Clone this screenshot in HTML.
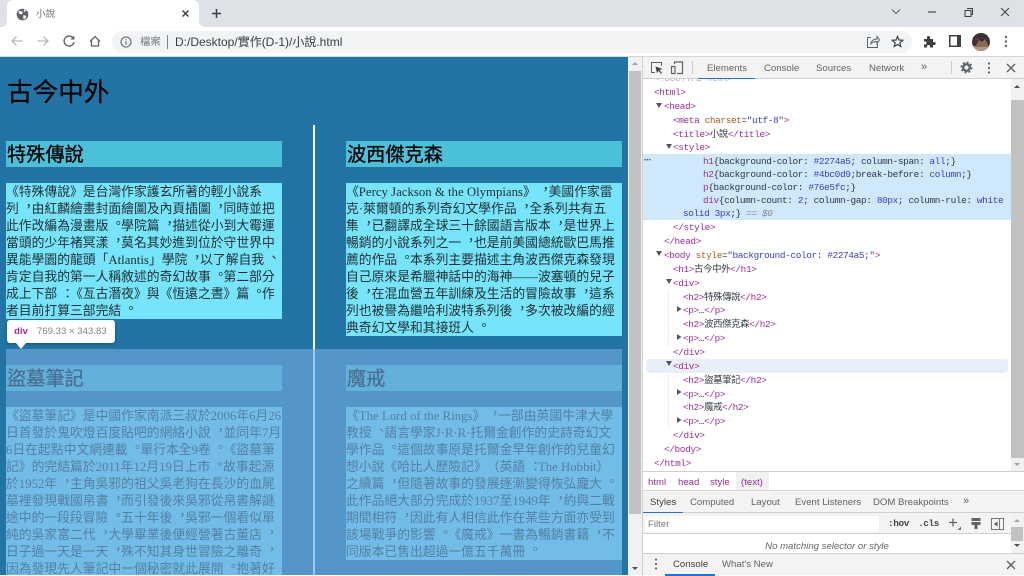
<!DOCTYPE html>
<html lang="zh-TW">
<head>
<meta charset="utf-8">
<title>小說</title>
<style>
html,body{margin:0;padding:0;width:1024px;height:576px;overflow:hidden;background:#fff}
body{position:relative;font-family:"Liberation Sans","Noto Sans CJK TC",sans-serif;text-spacing-trim:space-all}
.a{position:absolute}
.t{position:absolute;white-space:nowrap}
.p{position:absolute;white-space:nowrap;font:12.8px/17px "Liberation Serif","Noto Sans CJK TC",serif;color:#222e33;left:0;margin-top:1px;text-spacing-trim:space-all}
.c{position:relative;left:3.5px;top:-2.5px}
.d{position:relative;left:4px}
.box{position:absolute;background:#76e5fc;overflow:hidden}
.h2{position:absolute;background:#4bc0d9;width:276px;height:26px;font:normal 19.2px/29px "Liberation Serif","Noto Sans CJK TC",serif;-webkit-text-stroke:.35px #000;color:#000;white-space:nowrap;padding-left:1px;box-sizing:border-box}
.m{position:absolute;white-space:pre;font:9.4px/13px "Liberation Mono","Noto Sans CJK TC",monospace;letter-spacing:-.36px;color:#303942}
.m i{font-style:normal;color:#a12b96}
.m b{font-weight:normal;color:#a85a20}
.m u{text-decoration:none;color:#3d3dc0}
.ui{position:absolute;white-space:nowrap;font:9.6px/13px "Liberation Sans","Noto Sans CJK TC",sans-serif;color:#5f6368}
svg{position:absolute;display:block}
</style>
</head>
<body>
<!-- tab strip -->
<div class="a" style="left:0;top:0;width:1024px;height:27px;background:#dee1e6"></div>
<div class="a" style="left:7px;top:0;width:192px;height:27px;background:#fff;border-radius:6px 6px 0 0"></div>
<div class="a" style="left:1px;top:21px;width:6px;height:6px;background:#fff"></div>
<div class="a" style="left:1px;top:21px;width:6px;height:6px;background:#dee1e6;border-radius:0 0 6px 0"></div>
<div class="a" style="left:199px;top:21px;width:6px;height:6px;background:#fff"></div>
<div class="a" style="left:199px;top:21px;width:6px;height:6px;background:#dee1e6;border-radius:0 0 0 6px"></div>
<svg style="left:16px;top:8px" width="13" height="13" viewBox="0 0 13 13"><circle cx="6.500" cy="6.500" r="5.800" fill="#5f6368"/><path d="M3 3l2.500 .3 1.400 1.400-1 1.500-1.700.1-1.800-1.600zM7.200 7.200l2.500.4.600 1.600-1.800 2-1.200-.6zM8 1.400l2 .8-.8 1.600-1.400-.4z" fill="#fff"/></svg>
<div class="ui" style="left:36px;top:8px;color:#6f7377;font-size:9.600px">小說</div>
<svg style="left:181px;top:9px" width="9" height="9" viewBox="0 0 9 9"><path d="M1.500 1.500l6 6M7.500 1.500l-6 6" stroke="#3c4043" stroke-width="1.400"/></svg>
<svg style="left:211px;top:8px" width="11" height="11" viewBox="0 0 11 11"><path d="M5.500 1v9M1 5.500h9" stroke="#3c4043" stroke-width="1.500"/></svg>
<svg style="left:884px;top:6px" width="140" height="12" viewBox="0 0 140 12"><path d="M8 3.500l4 4 4-4" fill="none" stroke="#5f6368" stroke-width="1"/><path d="M44 6h8" stroke="#3c4043" stroke-width="1.100"/><path d="M83 2.500h5.500v6H87M81 4.500h6v6h-6z" fill="none" stroke="#3c4043" stroke-width="1"/><path d="M117 2l8 8M125 2l-8 8" stroke="#3c4043" stroke-width="1"/></svg>
<!-- toolbar -->
<div class="a" style="left:0;top:27px;width:1024px;height:29px;background:#fff"></div>
<div class="a" style="left:0;top:56px;width:1024px;height:1px;background:#d5d7da"></div>
<svg style="left:10px;top:34px" width="14" height="14" viewBox="0 0 14 14"><path d="M12.500 7H2M6.500 2.500L2 7l4.500 4.500" fill="none" stroke="#b4b7bb" stroke-width="1.300"/></svg>
<svg style="left:36px;top:34px" width="14" height="14" viewBox="0 0 14 14"><path d="M1.500 7H12M7.500 2.500L12 7l-4.500 4.500" fill="none" stroke="#b4b7bb" stroke-width="1.300"/></svg>
<svg style="left:62px;top:34px" width="14" height="14" viewBox="0 0 14 14"><path d="M11.300 4.300A5 5 0 1 0 12 8" fill="none" stroke="#5f6368" stroke-width="1.400"/><path d="M12.300 1.500v4h-4z" fill="#5f6368"/></svg>
<svg style="left:88px;top:34px" width="14" height="14" viewBox="0 0 14 14"><path d="M2 7.500L7 2.500l5 5M3.500 6.500v5.500h7V6.500" fill="none" stroke="#5f6368" stroke-width="1.300"/></svg>
<div class="a" style="left:112px;top:31px;width:800px;height:22px;background:#f1f3f4;border-radius:11px"></div>
<svg style="left:120px;top:36px" width="12" height="12" viewBox="0 0 12 12"><circle cx="6" cy="6" r="5" fill="none" stroke="#5f6368" stroke-width="1.100"/><path d="M6 5.300v3.500M6 3.200v1.100" stroke="#5f6368" stroke-width="1.100"/></svg>
<div class="ui" style="left:140px;top:36px;font-size:10.400px;line-height:14px;color:#777a7e">檔案</div>
<div class="a" style="left:167px;top:35px;width:1px;height:14px;background:#80868b"></div>
<div class="ui" style="left:175px;top:35px;font-size:12px;line-height:14px;color:#3c4043">D:/Desktop/實作(D-1)/小說.html</div>
<svg style="left:866px;top:35px" width="14" height="14" viewBox="0 0 14 14"><path d="M5 2.500H1.500v10h10V9M5 9c0-3 2.500-5 6-5V1.500L13.500 5 11 8.500V6.500C8.500 6.500 6.500 7 5 9z" fill="none" stroke="#5f6368" stroke-width="1"/></svg>
<svg style="left:891px;top:35px" width="13" height="13" viewBox="0 0 13 13"><path d="M6.500 1.500l1.500 3.500 3.800.3-2.900 2.500.9 3.700-3.300-2-3.300 2 .9-3.700L1.200 5.300 5 5z" fill="none" stroke="#3c4043" stroke-width="1.200"/></svg>
<svg style="left:923px;top:35px" width="13" height="13" viewBox="0 0 13 13"><path d="M1 4h3V2.500a1.500 1.500 0 0 1 3 0V4h3v3h1.200a1.500 1.500 0 0 1 0 3H10v2.500H7v-1a1.500 1.500 0 0 0-3 0v1H1V9.500h1a1.500 1.500 0 0 0 0-3H1z" fill="#3c4043"/></svg>
<svg style="left:949px;top:35px" width="12" height="12" viewBox="0 0 12 12"><path d="M0 0h12v12H0zM1.500 1.500v9H8v-9z" fill="#3c4043" fill-rule="evenodd"/></svg>
<svg style="left:972px;top:33px" width="18" height="18" viewBox="0 0 18 18"><defs><clipPath id="c"><circle cx="9" cy="9" r="9"/></clipPath></defs><g clip-path="url(#c)"><rect width="18" height="18" fill="#3a3035"/><rect y="13" width="18" height="5" fill="#a99a8a"/><path d="M3 14l4-7 3 2 3-3 4 8z" fill="#8a6a50"/><circle cx="5" cy="6" r="2.200" fill="#8a2030"/><rect x="1" y="3" width="6" height="2" fill="#25305a"/></g></svg>
<svg style="left:1004px;top:35px" width="4" height="13" viewBox="0 0 4 13"><circle cx="2" cy="2" r="1.200" fill="#5f6368"/><circle cx="2" cy="6.500" r="1.200" fill="#5f6368"/><circle cx="2" cy="11" r="1.200" fill="#5f6368"/></svg>

<!-- page -->
<div class="a" style="left:0;top:57px;width:628px;height:518px;background:#2274a5;overflow:hidden">
  <div class="t" style="left:7px;top:20px;font:normal 25.6px/32px 'Liberation Serif','Noto Sans CJK TC',serif;-webkit-text-stroke:.25px #000;color:#000">古今中外</div>
  <div class="a" style="left:313px;top:68px;width:2px;height:224px;background:#fff"></div>
  <div class="a" style="left:313px;top:292px;width:2px;height:226px;background:#fff"></div>

  <div class="h2" style="left:6px;top:84px">特殊傳說</div>
  <div class="box" style="left:6px;top:126px;width:276px;height:136px">
    <div class="p" style="top:0">《特殊傳說》是台灣作家護玄所著的輕小說系</div>
    <div class="p" style="top:17px">列<span class="c">，</span>由紅麟繪畫封面繪圖及內頁插圖<span class="c">，</span>同時並把</div>
    <div class="p" style="top:34px">此作改編為漫畫版<span class="c">。</span>學院篇<span class="c">，</span>描述從小到大霉運</div>
    <div class="p" style="top:51px">當頭的少年褚冥漾<span class="c">，</span>莫名其妙進到位於守世界中</div>
    <div class="p" style="top:68px">異能學園的龍頭「Atlantis」學院<span class="c">，</span>以了解自我<span class="c">、</span></div>
    <div class="p" style="top:85px">肯定自我的第一人稱敘述的奇幻故事<span class="c">。</span>第二部分</div>
    <div class="p" style="top:102px">成上下部<span class="d">：</span>《亙古潛夜》與《恆遠之晝》篇<span class="c">。</span>作</div>
    <div class="p" style="top:119px">者目前打算三部完結<span class="c">。</span></div>
  </div>

  <div class="h2" style="left:346px;top:84px">波西傑克森</div>
  <div class="box" style="left:346px;top:126px;width:276px;height:153px">
    <div class="p" style="top:0">《Percy Jackson &amp; the Olympians》<span class="c">，</span>美國作家雷</div>
    <div class="p" style="top:17px">克·萊爾頓的系列奇幻文學作品<span class="c">，</span>全系列共有五</div>
    <div class="p" style="top:34px">集<span class="c">，</span>已翻譯成全球三十餘國語言版本<span class="c">，</span>是世界上</div>
    <div class="p" style="top:51px">暢銷的小說系列之一<span class="c">，</span>也是前美國總統歐巴馬推</div>
    <div class="p" style="top:68px">薦的作品<span class="c">。</span>本系列主要描述主角波西傑克森發現</div>
    <div class="p" style="top:85px">自己原來是希臘神話中的海神——波塞頓的兒子</div>
    <div class="p" style="top:102px">後<span class="c">，</span>在混血營五年訓練及生活的冒險故事<span class="c">，</span>這系</div>
    <div class="p" style="top:119px">列也被譽為繼哈利波特系列後<span class="c">，</span>多次被改編的經</div>
    <div class="p" style="top:136px">典奇幻文學和其接班人<span class="c">。</span></div>
  </div>

  <div class="h2" style="left:6px;top:308px">盜墓筆記</div>
  <div class="box" style="left:6px;top:350px;width:276px;height:170px">
    <div class="p" style="top:0">《盜墓筆記》是中國作家南派三叔於2006年6月26</div>
    <div class="p" style="top:17px">日首發於鬼吹燈百度貼吧的網絡小說<span class="c">，</span>並同年7月</div>
    <div class="p" style="top:34px">6日在起點中文網連載<span class="c">。</span>單行本全9卷<span class="c">。</span>《盜墓筆</div>
    <div class="p" style="top:51px">記》的完結篇於2011年12月19日上市<span class="c">。</span>故事起源</div>
    <div class="p" style="top:68px">於1952年<span class="c">，</span>主角吳邪的祖父吳老狗在長沙的血屍</div>
    <div class="p" style="top:85px">墓裡發現戰國帛書<span class="c">，</span>而引發後來吳邪從帛書解謎</div>
    <div class="p" style="top:102px">途中的一段段冒險<span class="c">。</span>五十年後<span class="c">，</span>吳邪一個看似單</div>
    <div class="p" style="top:119px">純的吳家富二代<span class="c">，</span>大學畢業後便經營著古董店<span class="c">，</span></div>
    <div class="p" style="top:136px">日子過一天是一天<span class="c">，</span>殊不知其身世冒險之離奇<span class="c">，</span></div>
    <div class="p" style="top:153px">因為發現先人筆記中一個秘密就此展開<span class="c">。</span>抱著好</div>
  </div>

  <div class="h2" style="left:346px;top:308px">魔戒</div>
  <div class="box" style="left:346px;top:350px;width:276px;height:153px">
    <div class="p" style="top:0">《The Lord of the Rings》<span class="c">，</span>一部由英國牛津大學</div>
    <div class="p" style="top:17px">教授<span class="c">、</span>語言學家J·R·R·托爾金創作的史詩奇幻文</div>
    <div class="p" style="top:34px">學作品<span class="c">。</span>這個故事原是托爾金早年創作的兒童幻</div>
    <div class="p" style="top:51px">想小說《哈比人歷險記》（英語<span class="d">：</span>The Hobbit）</div>
    <div class="p" style="top:68px">之續篇<span class="c">，</span>但隨著故事的發展逐漸變得恢弘龐大<span class="c">。</span></div>
    <div class="p" style="top:85px">此作品絕大部分完成於1937至1949年<span class="c">，</span>約與二戰</div>
    <div class="p" style="top:102px">期間相符<span class="c">，</span>因此有人相信此作在某些方面亦受到</div>
    <div class="p" style="top:119px">該場戰爭的影響<span class="c">。</span>《魔戒》一書為暢銷書籍<span class="c">，</span>不</div>
    <div class="p" style="top:136px">同版本已售出超過一億五千萬冊<span class="c">。</span></div>
  </div>

  <!-- inspect overlay -->
  <div class="a" style="left:6px;top:292px;width:616px;height:226px;background:rgba(111,168,220,.66)"></div>
  <!-- tooltip -->
  <div class="a" style="left:7px;top:263px;width:108px;height:23px;background:#fff;border-radius:3px;box-shadow:0 1px 3px rgba(0,0,0,.3)"></div>
  <div class="a" style="left:16px;top:286px;width:0;height:0;border-left:5px solid transparent;border-right:5px solid transparent;border-top:6px solid #fff"></div>
  <div class="t" style="left:14px;top:268px;font:bold 9.600px/13px 'Liberation Sans',sans-serif;color:#a8289a">div</div>
  <div class="t" style="left:37px;top:268px;font:9.600px/13px 'Liberation Sans',sans-serif;color:#858585">769.33 × 343.83</div>
</div>

<!-- page scrollbar -->
<div class="a" style="left:628px;top:57px;width:14px;height:518px;background:#f1f1f1"></div>
<div class="a" style="left:629px;top:71px;width:12px;height:443px;background:#c1c1c1"></div>
<div class="a" style="left:632px;top:62px;width:0;height:0;border-left:3px solid transparent;border-right:3px solid transparent;border-bottom:3px solid #a3a3a3"></div>
<div class="a" style="left:632px;top:567px;width:0;height:0;border-left:3px solid transparent;border-right:3px solid transparent;border-top:3px solid #505050"></div>
<div class="a" style="left:0;top:575px;width:1024px;height:1px;background:#fff"></div>

<!-- devtools -->
<div class="a" style="left:642px;top:57px;width:382px;height:519px;background:#fff;border-left:1px solid #d0d0d0;box-sizing:border-box"></div>
<div class="a" style="left:643px;top:57px;width:381px;height:22px;background:#f3f3f3;border-bottom:1px solid #d0d0d0;box-sizing:border-box"></div>
<svg style="left:650px;top:61px" width="14" height="14" viewBox="0 0 14 14"><path d="M5 11.500H1.500v-10h10V5" fill="none" stroke="#5f6368" stroke-width="1"/><path d="M5.500 5.500l7 2.500-3 1 2.500 3-1 .8-2.500-3-1.500 2.500z" fill="#3c4043"/></svg>
<svg style="left:670px;top:61px" width="14" height="14" viewBox="0 0 14 14"><path d="M5 12.500H1.500V5.500H5zM4.500 3V1h8v11.500H7" fill="none" stroke="#5f6368" stroke-width="1.200"/></svg>
<div class="a" style="left:692px;top:61px;width:1px;height:13px;background:#ccc"></div>
<div class="a" style="left:698px;top:77.500px;width:57px;height:1.500px;background:#1a73e8"></div>
<div class="ui" style="left:707px;top:62px">Elements</div>
<div class="ui" style="left:764px;top:62px">Console</div>
<div class="ui" style="left:816px;top:62px">Sources</div>
<div class="ui" style="left:869px;top:62px">Network</div>
<div class="ui" style="left:921px;top:61px;font-size:11px">»</div>
<div class="a" style="left:951px;top:61px;width:1px;height:13px;background:#ccc"></div>
<svg style="left:960px;top:61px" width="13" height="13" viewBox="0 0 13 13"><circle cx="6.500" cy="6.500" r="3.300" fill="none" stroke="#5f6368" stroke-width="2.400"/><circle cx="6.500" cy="6.500" r="5.200" fill="none" stroke="#5f6368" stroke-width="1.600" stroke-dasharray="2 2.080"/></svg>
<svg style="left:987px;top:62px" width="4" height="12" viewBox="0 0 4 12"><circle cx="2" cy="1.500" r="1.100" fill="#5f6368"/><circle cx="2" cy="6" r="1.100" fill="#5f6368"/><circle cx="2" cy="10.500" r="1.100" fill="#5f6368"/></svg>
<svg style="left:1006px;top:63px" width="10" height="10" viewBox="0 0 10 10"><path d="M1 1l8 8M9 1l-8 8" stroke="#5f6368" stroke-width="1.400"/></svg>

<!-- elements tree -->
<div class="a" style="left:643px;top:154px;width:368px;height:66px;background:#cfe8fc"></div>
<div class="a" style="left:646px;top:359px;width:362px;height:14px;background:#e9eff9;border-radius:3px"></div>
<div class="a" style="left:650px;top:79px;width:120px;height:4px;overflow:hidden"><div class="m" style="left:4px;top:-7px;color:#b5b5b5">&lt;!DOCTYPE html&gt;</div></div>
<div class="m" style="left:654px;top:86px"><i>&lt;html&gt;</i></div>
<div class="m" style="left:664px;top:100px"><i>&lt;head&gt;</i></div>
<div class="m" style="left:673px;top:114px"><i>&lt;meta</i> <b>charset</b>=<u>"utf-8"</u><i>&gt;</i></div>
<div class="m" style="left:673px;top:128px"><i>&lt;title&gt;</i>小說<i>&lt;/title&gt;</i></div>
<div class="m" style="left:673px;top:141px"><i>&lt;style&gt;</i></div>
<div class="m" style="left:703px;top:155px"><i>h1</i>{background-color: <u>#2274a5</u>; column-span: <u>all</u>;}</div>
<div class="m" style="left:703px;top:168px"><i>h2</i>{background-color: <u>#4bc0d9</u>;break-before: <u>column</u>;}</div>
<div class="m" style="left:703px;top:181px"><i>p</i>{background-color: <u>#76e5fc</u>;}</div>
<div class="m" style="left:703px;top:194px"><i>div</i>{column-count: <u>2</u>; column-gap: <u>80px</u>; column-rule: <u>white</u></div>
<div class="m" style="left:683px;top:207px"><u>solid 3px</u>;} <span style="color:#888;font-style:italic">== $0</span></div>
<div class="m" style="left:673px;top:221px"><i>&lt;/style&gt;</i></div>
<div class="m" style="left:664px;top:235px"><i>&lt;/head&gt;</i></div>
<div class="m" style="left:664px;top:249px"><i>&lt;body</i> <b>style</b>=<u>"background-color: #2274a5;"</u><i>&gt;</i></div>
<div class="m" style="left:673px;top:263px"><i>&lt;h1&gt;</i>古今中外<i>&lt;/h1&gt;</i></div>
<div class="m" style="left:673px;top:277px"><i>&lt;div&gt;</i></div>
<div class="m" style="left:683px;top:291px"><i>&lt;h2&gt;</i>特殊傳說<i>&lt;/h2&gt;</i></div>
<div class="m" style="left:683px;top:304px"><i>&lt;p&gt;</i>…<i>&lt;/p&gt;</i></div>
<div class="m" style="left:683px;top:318px"><i>&lt;h2&gt;</i>波西傑克森<i>&lt;/h2&gt;</i></div>
<div class="m" style="left:683px;top:332px"><i>&lt;p&gt;</i>…<i>&lt;/p&gt;</i></div>
<div class="m" style="left:673px;top:346px"><i>&lt;/div&gt;</i></div>
<div class="m" style="left:673px;top:360px"><i>&lt;div&gt;</i></div>
<div class="m" style="left:683px;top:374px"><i>&lt;h2&gt;</i>盜墓筆記<i>&lt;/h2&gt;</i></div>
<div class="m" style="left:683px;top:388px"><i>&lt;p&gt;</i>…<i>&lt;/p&gt;</i></div>
<div class="m" style="left:683px;top:401px"><i>&lt;h2&gt;</i>魔戒<i>&lt;/h2&gt;</i></div>
<div class="m" style="left:683px;top:415px"><i>&lt;p&gt;</i>…<i>&lt;/p&gt;</i></div>
<div class="m" style="left:673px;top:429px"><i>&lt;/div&gt;</i></div>
<div class="m" style="left:664px;top:443px"><i>&lt;/body&gt;</i></div>
<div class="m" style="left:654px;top:457px"><i>&lt;/html&gt;</i></div>
<svg style="left:650px;top:100px" width="40" height="330" viewBox="0 0 40 330" fill="#555"><path d="M6 3h6l-3 5zM16 44h6l-3 5zM6 151h6l-3 5zM16 179h6l-3 5zM16 261h6l-3 5zM27 206v6l4.500-3zM27 234v6l4.500-3zM27 289v6l4.500-3zM27 317v6l4.500-3z"/></svg>
<div class="a" style="left:668px;top:290px;width:1px;height:56px;background:#eee"></div>
<div class="a" style="left:668px;top:373px;width:1px;height:56px;background:#eee"></div>
<div class="t" style="left:644px;top:156px;font:6px/10px 'Liberation Sans',sans-serif;color:#666;letter-spacing:.3px">•••</div>
<!-- elements scrollbar -->
<div class="a" style="left:1011px;top:79px;width:13px;height:392px;background:#f1f1f1"></div>
<div class="a" style="left:1011px;top:100px;width:13px;height:358px;background:#c1c1c1"></div>
<div class="a" style="left:1014px;top:85px;width:0;height:0;border-left:3.500px solid transparent;border-right:3.500px solid transparent;border-bottom:3.500px solid #505050"></div>
<div class="a" style="left:1014px;top:463px;width:0;height:0;border-left:3.500px solid transparent;border-right:3.500px solid transparent;border-top:3.500px solid #a3a3a3"></div>
<!-- breadcrumb -->
<div class="a" style="left:643px;top:471px;width:381px;height:1px;background:#d0d0d0"></div>
<div class="a" style="left:736px;top:472px;width:33px;height:18px;background:#f1f1f1"></div>
<div class="ui" style="left:648px;top:476px;color:#a12b96">html</div>
<div class="ui" style="left:678px;top:476px;color:#a12b96">head</div>
<div class="ui" style="left:710px;top:476px;color:#a12b96">style</div>
<div class="ui" style="left:741px;top:476px;color:#a12b96">(text)</div>
<!-- styles tabs -->
<div class="a" style="left:643px;top:490px;width:381px;height:23px;background:#f3f3f3;border-top:1px solid #d8d8d8;border-bottom:1px solid #d0d0d0;box-sizing:border-box"></div>
<div class="a" style="left:643px;top:512px;width:40px;height:1.500px;background:#1a73e8"></div>
<div class="ui" style="left:650px;top:496px;color:#3c4043">Styles</div>
<div class="ui" style="left:690px;top:496px">Computed</div>
<div class="ui" style="left:751px;top:496px">Layout</div>
<div class="ui" style="left:795px;top:496px">Event Listeners</div>
<div class="ui" style="left:873px;top:496px">DOM Breakpoints</div>
<div class="ui" style="left:963px;top:495px;font-size:11px">»</div>
<!-- filter -->
<div class="a" style="left:643px;top:513px;width:368px;height:21px;background:#f3f3f3;border-bottom:1px solid #d0d0d0;box-sizing:border-box"></div>
<div class="a" style="left:645px;top:516px;width:234px;height:16px;background:#fff"></div>
<div class="ui" style="left:648px;top:518px;color:#777">Filter</div>
<div class="m" style="left:888px;top:517px;font-weight:bold;color:#444">:hov</div>
<div class="m" style="left:918px;top:517px;font-weight:bold;color:#444">.cls</div>
<svg style="left:948px;top:517px" width="14" height="14" viewBox="0 0 14 14"><path d="M5 1.500v8M1 5.500h8" stroke="#5f6368" stroke-width="1.300"/><path d="M13 9.500v3.500h-3.500z" fill="#6e6e6e"/></svg>
<svg style="left:970px;top:517px" width="12" height="14" viewBox="0 0 12 14"><path d="M1.500 1h9v7h-9z" fill="#5f6368"/><path d="M1.500 4.500h9" stroke="#f3f3f3" stroke-width="1"/><rect x="4.500" y="8" width="3" height="4" fill="#5f6368"/></svg>
<svg style="left:991px;top:518px" width="13" height="12" viewBox="0 0 13 12"><path d="M.5 .5h12v11H.5zM8.500 .5v11" fill="none" stroke="#777" stroke-width="1"/><path d="M6.500 3.500v5L3 6z" fill="#555"/></svg>
<!-- small styles scrollbar -->
<div class="a" style="left:1011px;top:513px;width:13px;height:40px;background:#f1f1f1"></div>
<div class="a" style="left:1011px;top:527px;width:12px;height:14px;background:#c1c1c1"></div>
<div class="a" style="left:1014px;top:519px;width:0;height:0;border-left:3.500px solid transparent;border-right:3.500px solid transparent;border-bottom:3.500px solid #a3a3a3"></div>
<div class="a" style="left:1014px;top:544px;width:0;height:0;border-left:3.500px solid transparent;border-right:3.500px solid transparent;border-top:3.500px solid #505050"></div>
<div class="ui" style="left:643px;top:540px;width:368px;text-align:center;font-style:italic;color:#5f6368">No matching selector or style</div>
<!-- drawer -->
<div class="a" style="left:643px;top:553px;width:381px;height:22px;background:#f3f3f3;border-top:1px solid #d0d0d0;box-sizing:border-box"></div>
<svg style="left:654px;top:558px" width="4" height="12" viewBox="0 0 4 12"><circle cx="2" cy="1.500" r="1.100" fill="#5f6368"/><circle cx="2" cy="6" r="1.100" fill="#5f6368"/><circle cx="2" cy="10.500" r="1.100" fill="#5f6368"/></svg>
<div class="ui" style="left:673px;top:558px;color:#3c4043">Console</div>
<div class="ui" style="left:722px;top:558px">What's New</div>
<div class="a" style="left:665px;top:574px;width:50px;height:1.500px;background:#1a73e8"></div>
<svg style="left:1006px;top:560px" width="10" height="10" viewBox="0 0 10 10"><path d="M1 1l8 8M9 1l-8 8" stroke="#5f6368" stroke-width="1.400"/></svg>
</body>
</html>
